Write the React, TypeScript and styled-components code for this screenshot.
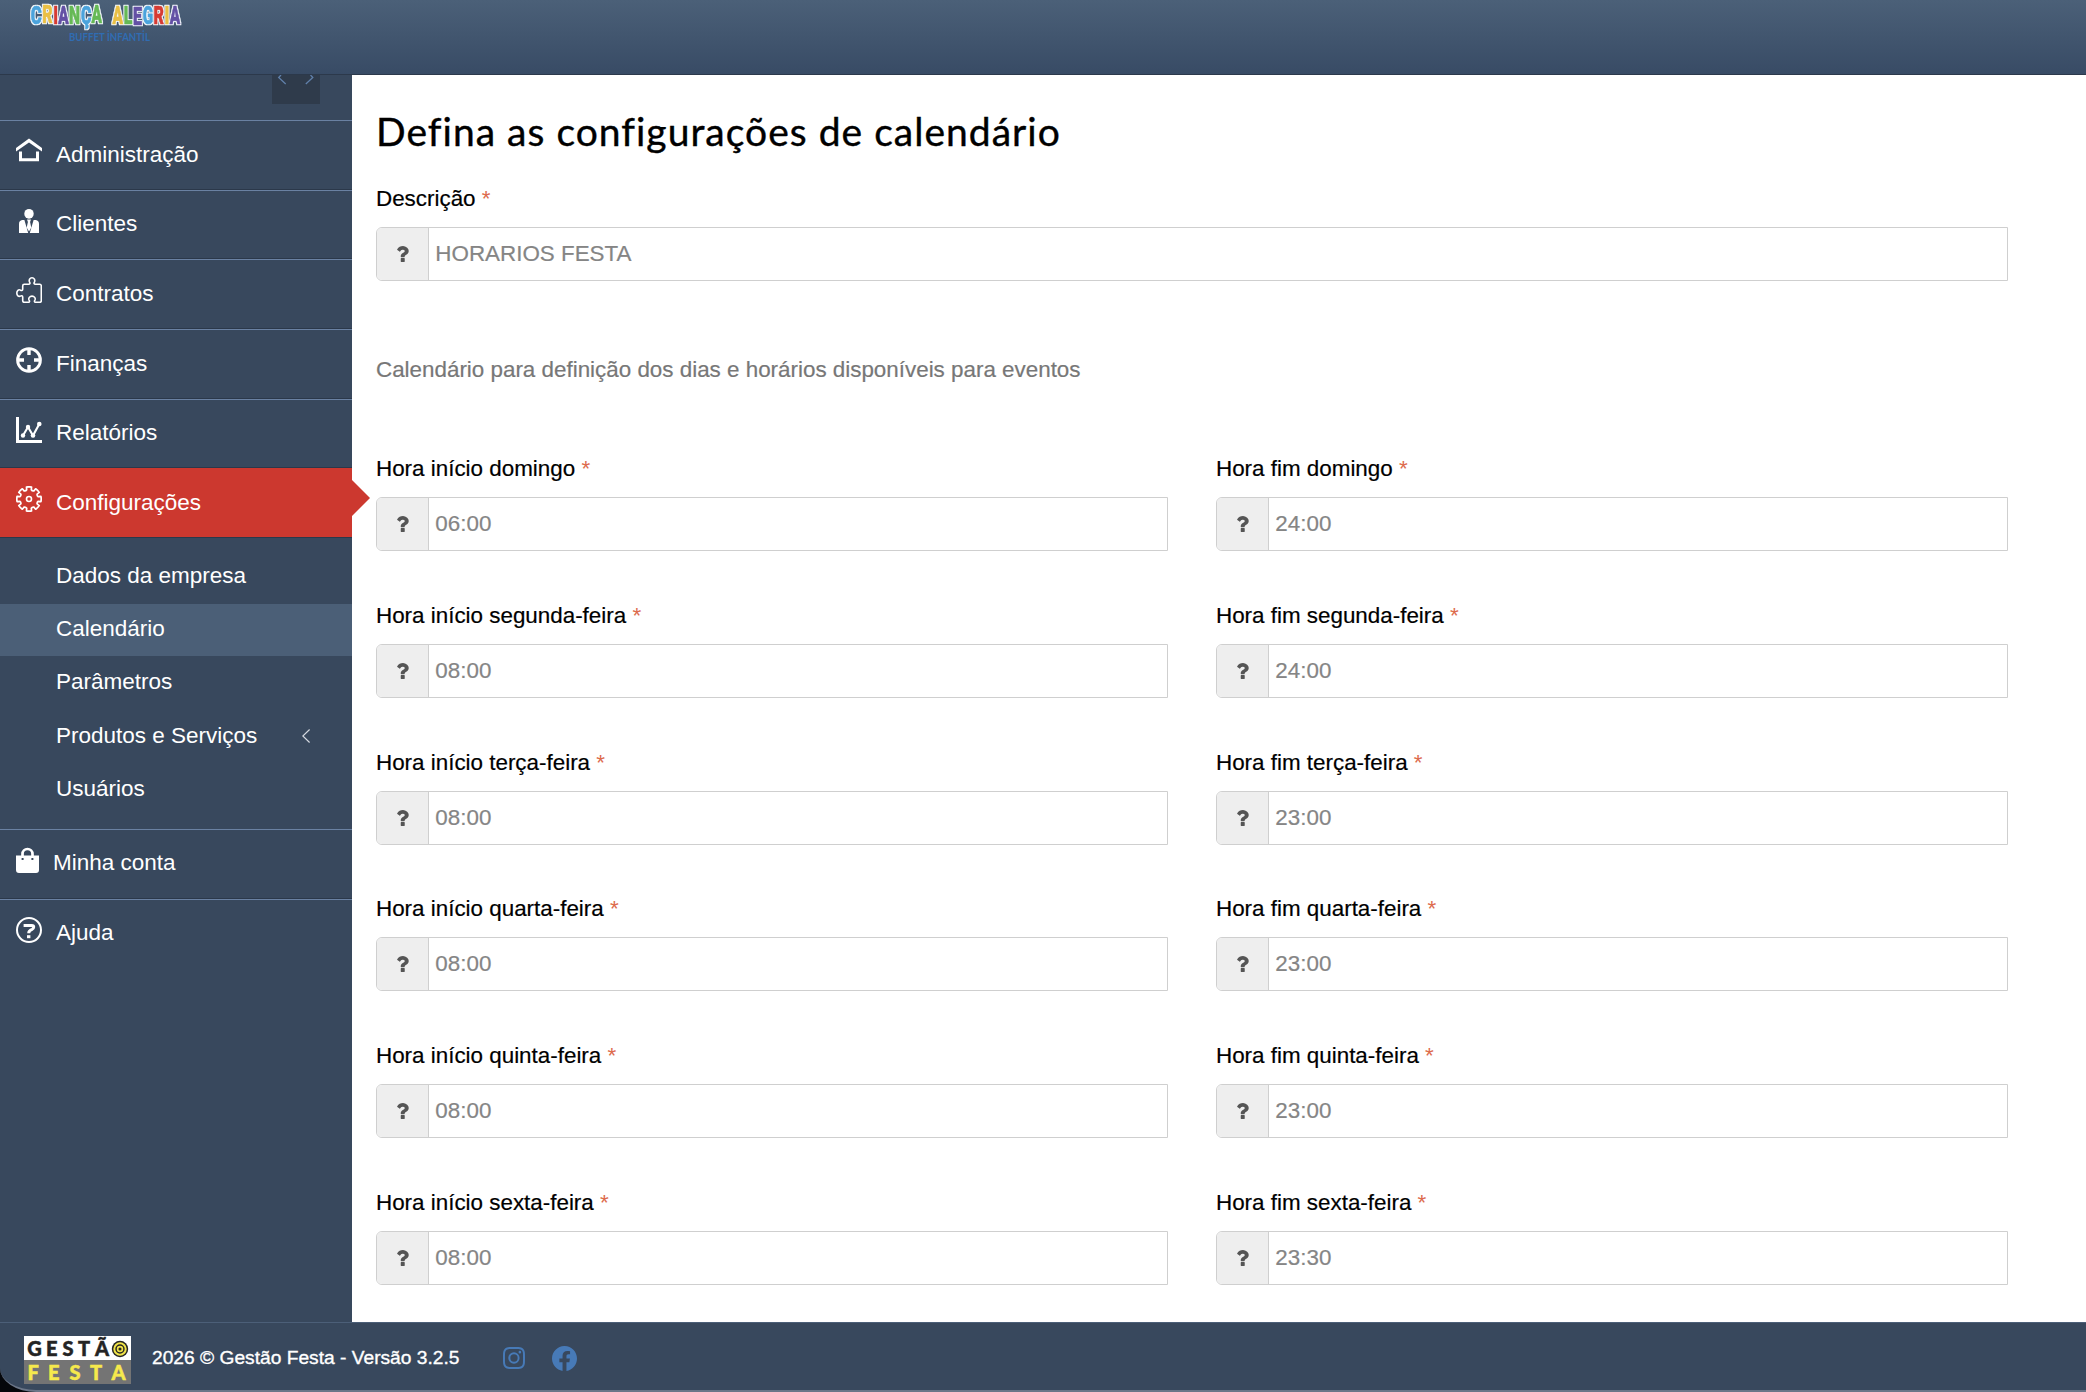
import React from 'react';
import styled, { createGlobalStyle, css } from 'styled-components';
import { BsFacebook, BsInstagram } from 'react-icons/bs';

const sans = `"Liberation Sans", Arial, Helvetica, sans-serif`;

const Global = createGlobalStyle`
  *, *::before, *::after { box-sizing: border-box; }
  html, body { margin: 0; padding: 0; background: #05070b; }
  body { font-family: ${sans}; font-size: 22.5px; overflow: hidden; }
`;

const Page = styled.div`
  display: flex;
  flex-direction: column;
  width: 2086px;
  height: 1392px;
  overflow: hidden;
`;

const Header = styled.header`
  flex: none;
  height: 75px;
  padding-left: 28px;
  background: linear-gradient(to bottom, #4b6078, #384b65);
  border-bottom: 1px solid #2c394b;
`;

const Body = styled.div`
  flex: 1;
  min-height: 0;
  display: flex;
`;

const Sidebar = styled.aside`
  flex: none;
  width: 352px;
  background: #38485d;
  color: #fff;
`;

const TogglerBar = styled.div`
  height: 45px;
  padding-right: 32px;
  display: flex;
  justify-content: flex-end;
  align-items: flex-start;
`;

const Toggler = styled.div`
  width: 48px;
  height: 29px;
  background: #2f3b4b;
`;

const Menu = styled.nav`
  display: flex;
  flex-direction: column;
`;

const MenuItem = styled.a<{ $active?: boolean }>`
  position: relative;
  display: flex;
  align-items: center;
  gap: 14px;
  height: 69.67px;
  padding: 0 16px 0.6px;
  border-top: 1px solid #6a81a2;
  border-bottom: 1px solid #2b384a;
  > svg { flex: none; margin-bottom: 7px; }
  ${(p) =>
    p.$active &&
    css`
      background: #cc382f;
      border-top-color: #cc382f;
      &::after {
        content: '';
        position: absolute;
        left: 352px;
        top: 11px;
        border: 18px solid transparent;
        border-right-width: 0;
        border-left-color: #cc382f;
      }
    `}
  &:last-child { border-bottom-color: transparent; }
`;

const SubMenu = styled.div`
  display: flex;
  flex-direction: column;
  gap: 1.33px;
  padding: 12.3px 0 13.4px;
`;

const SubItem = styled.a<{ $active?: boolean }>`
  display: flex;
  align-items: center;
  justify-content: space-between;
  height: 52px;
  padding: 0 42px 1px 56px;
  background: ${(p) => (p.$active ? '#4b5f77' : 'transparent')};
`;

const Content = styled.main`
  flex: 1;
  min-width: 0;
  background: #fff;
  padding: 29px 78px 0 24px;
  overflow: hidden;
`;

const Title = styled.h1`
  margin: 0;
  height: 55px;
  font: 400 39px/54px Lato, sans-serif;
  letter-spacing: 1.02px;
  color: #000;
  white-space: nowrap;
  -webkit-text-stroke: 0.4px #000;
`;

const Field = styled.div`
  display: flex;
  flex-direction: column;
`;

const Label = styled.label`
  height: 30px;
  line-height: 30px;
  margin-bottom: 13px;
  font-size: 22.4px;
  color: #000;
  -webkit-text-stroke: 0.2px #000;
`;

const Required = styled.span`
  color: #dd6b4d;
  -webkit-text-stroke: 0;
`;

const InputGroup = styled.div`
  display: flex;
  height: 54px;
  border: 1px solid #cfcfcf;
  border-radius: 6px 0 0 6px;
  background: #fff;
  overflow: hidden;
`;

const Addon = styled.span`
  flex: none;
  width: 52px;
  display: flex;
  align-items: center;
  justify-content: center;
  background: #eee;
  border-right: 1px solid #cfcfcf;
`;

const Value = styled.span`
  flex: 1;
  padding-left: 6.3px;
  line-height: 51px;
  font-size: 22.4px;
  color: #858585;
  -webkit-text-stroke: 0.2px #858585;
`;

const DescriptionField = styled(Field)`
  margin-top: 25px;
`;

const Hint = styled.p`
  margin: 74px 0 69px;
  height: 30px;
  line-height: 30px;
  font-size: 22.4px;
  color: #777;
  -webkit-text-stroke: 0.2px #777;
`;

const Grid = styled.div`
  display: grid;
  grid-template-columns: 1fr 1fr;
  column-gap: 48px;
  row-gap: 49.8px;
`;

const FooterBack = styled.div`
  flex: none;
  height: 70px;
  background: #05070b;
`;

const Footer = styled.footer`
  height: 70px;
  display: flex;
  align-items: center;
  padding: 3px 0 0 24px;
  background: #38485d;
  border-top: 1px solid #4c5f78;
  border-bottom: 2px solid #6b7688;
  border-bottom-left-radius: 36px 24px;
`;

const FooterLogo = styled.div`
  width: 107px;
  height: 48px;
  margin: 4px 21px 0 0;
  > svg { display: block; }
`;

const Copyright = styled.span`
  width: 307px;
  font-size: 19.2px;
  color: #fff;
  white-space: nowrap;
  -webkit-text-stroke: 0.35px #fff;
`;

const Social = styled.div`
  display: flex;
  align-items: center;
  gap: 27px;
  margin-left: 43.5px;
  color: #477ab7;
  > svg { display: block; }
`;

const BrandSvg = styled.svg`
  display: block;
`;

/* ---------- drawings ---------- */

const Icon = ({ children }: { children: React.ReactNode }) => (
  <svg width="26" height="26" viewBox="0 0 26 26" fill="none" stroke="#fff">
    {children}
  </svg>
);

const HomeIcon = () => (
  <Icon>
    <path d="M0 10 13 0.600 26 10V13.600L13 4.500 0 13.600z" fill="#fff" stroke="none" />
    <path d="M4.500 13.400v8.300h17v-8.300" strokeWidth="3" />
  </Icon>
);

const ClientIcon = () => (
  <Icon>
    <g fill="#fff" stroke="none">
      <ellipse cx="13" cy="5.8" rx="4.7" ry="4.9" />
      <path d="M8.4 12 12.2 25H5.5a2.5 2.5 0 0 1-2.5-2.5V16c0-2.4 1.2-3.6 3.2-3.9zM17.6 12 13.8 25H23v-9c0-2.4-1.2-3.6-3.2-3.9zM3 22h7v3H3zM11 11.6h4l-.9 2.4 1.2 5.4L13 23.4l-2.3-4 1.2-5.4z" />
    </g>
  </Icon>
);

const PuzzleIcon = () => (
  <Icon>
    <path
      strokeWidth="1.6"
      strokeLinejoin="round"
      d="M8.3 7.3H12.6c1.6 0 1.6-1.2 1-2.2C12.6 3 13.8.8 16 .8s3.4 2.2 2.4 4.3c-.6 1-.6 2.2 1 2.2h4.3a1.6 1.6 0 0 1 1.6 1.6v14.8a1.6 1.6 0 0 1-1.6 1.6h-4c-1.5 0-1.5-1.2-.8-2.2 1-1.9-.6-4-2.9-4s-3.9 2.1-2.9 4c.7 1 .7 2.2-.8 2.2H8.3a1.6 1.6 0 0 1-1.6-1.6V20c0-1.6-1.3-1.5-2.3-.9C2.6 20.1.8 18.5.8 16.1s1.8-4 3.6-3c1 .7 2.3.6 2.3-.9V8.9a1.6 1.6 0 0 1 1.6-1.6z"
    />
  </Icon>
);

const TargetIcon = () => (
  <Icon>
    <circle cx="13" cy="13" r="11.4" strokeWidth="2.9" />
    <path d="M13 2v6M13 18v6M2 13h6M18 13h6" strokeWidth="3.4" />
  </Icon>
);

const ChartIcon = () => (
  <Icon>
    <path d="M1.5 0V24.5H26" strokeWidth="3" />
    <path d="M7 18.500 12 10l5 8.500L23.300 7" strokeWidth="2.1" />
    <g fill="#fff" stroke="none">
      <circle cx="7" cy="18.5" r="2.2" />
      <circle cx="12" cy="10" r="2.2" />
      <circle cx="17" cy="18.5" r="2.3" />
      <circle cx="23.3" cy="7" r="2.3" />
    </g>
  </Icon>
);

const gearPath = (() => {
  const pt = (r: number, deg: number) => {
    const a = (deg * Math.PI) / 180;
    return `${(13 + r * Math.sin(a)).toFixed(2)} ${(13 - r * Math.cos(a)).toFixed(2)}`;
  };
  const parts: string[] = [];
  for (let i = 0; i < 8; i++) {
    const c = i * 45;
    parts.push(
      `${i ? 'L' : 'M'}${pt(9.5, c - 14)}L${pt(12.2, c - 12)}A12.2 12.2 0 0 1 ${pt(12.2, c + 12)}L${pt(9.5, c + 14)}Q${pt(8.4, c + 22.5)} ${pt(9.5, c + 31)}`
    );
  }
  return parts.join('') + 'Z';
})();

const GearIcon = () => (
  <Icon>
    <path d={gearPath} strokeWidth="1.7" strokeLinejoin="round" />
    <circle cx="13" cy="13" r="2.5" strokeWidth="1.6" />
  </Icon>
);

const BagIcon = () => (
  <svg width="23" height="26" viewBox="0 0 23 26" fill="none">
    <path d="M6.500 11V7a5 5 0 0 1 10 0V11" stroke="#fff" strokeWidth="2.7" />
    <path
      fillRule="evenodd"
      fill="#fff"
      d="M0 8.600h23v14.400a3 3 0 0 1-3 3H3a3 3 0 0 1-3-3zM5.600 11v2h2v-2zM15.400 11v2h2v-2z"
    />
  </svg>
);

const HelpIcon = () => (
  <Icon>
    <circle cx="13" cy="13" r="12" strokeWidth="2" />
    <path d="M7.600 8.400h8.200q1.900 0 1.900 1.700 0 1.500-1.700 2.300-3.300 1.400-3.300 3.800" strokeWidth="3" />
    <path d="M11 18.200h3.400v3H11z" fill="#fff" stroke="none" />
  </Icon>
);

const QuestionGlyph = () => (
  <svg width="12.7" height="16" viewBox="388 256 1016 1280" fill="#555">
    <path d="M1088 1256v240q0 16-12 28t-28 12h-240q-16 0-28-12t-12-28v-240q0-16 12-28t28-12h240q16 0 28 12t12 28zm316-600q0 54-15.500 101t-35 76.500-55 59.500-57.500 43.500-61 35.500q-41 23-68.500 65t-27.500 67q0 17-12 32.500t-28 15.500h-240q-15 0-25.500-18.500t-10.500-37.500v-45q0-83 65-156.500t143-108.500q59-27 84-56t25-76q0-42-46.500-74t-107.500-32q-65 0-108 29-35 25-107 115-13 16-31 16-12 0-25-8l-164-125q-13-10-15.500-25t5.500-28q160-266 464-266 80 0 161 31t146 83 106 127.500 41 158.500z" />
  </svg>
);

/* glyph, x, width, colour, vertical shift */
type Letter = [string, number, number, string, number];
const letters: Letter[] = [
  ['C', 2.8, 11, '#4ba3dc', 0],
  ['R', 14.2, 10.4, '#e9bf45', -1],
  ['I', 25.2, 4.8, '#d63b33', 0],
  ['A', 30.3, 10.4, '#6451a5', 0],
  ['N', 41, 11, '#66b956', 0],
  ['Ç', 53, 10.4, '#4ba3dc', 0],
  ['A', 63.5, 10.4, '#66b956', -1],
  ['A', 84.6, 10.4, '#e9bf45', 0],
  ['L', 95.8, 8.6, '#66b956', 0],
  ['E', 105, 9, '#6451a5', 1],
  ['G', 114.7, 10.4, '#4ba3dc', 0],
  ['R', 125.6, 10.4, '#d63b33', 0],
  ['I', 136.6, 4.8, '#e9bf45', 0],
  ['A', 141.8, 10.4, '#6451a5', 0],
];

const BrandLogo = () => (
  <BrandSvg width="160" height="46" viewBox="0 0 160 46">
    <defs>
      <filter id="halo" x="-5%" y="-20%" width="110%" height="140%" colorInterpolationFilters="sRGB">
        <feMorphology in="SourceAlpha" operator="dilate" radius="1.400" result="grown" />
        <feGaussianBlur in="grown" stdDeviation="0.400" result="soft" />
        <feFlood floodColor="#f4f8fc" />
        <feComposite in2="soft" operator="in" result="white" />
        <feMerge>
          <feMergeNode in="white" />
          <feMergeNode in="SourceGraphic" />
        </feMerge>
      </filter>
    </defs>
    <g
      filter="url(#halo)"
      fontFamily="Roboto, sans-serif"
      fontWeight="900"
      fontSize="26.500"
      strokeLinejoin="round"
      strokeWidth="0.700"
    >
      {letters.map(([ch, x, w, color, dy], i) => (
        <text
          key={i}
          x={x}
          y={23.7 + dy}
          textLength={w}
          lengthAdjust="spacingAndGlyphs"
          fill={color}
          stroke={color}
        >
          {ch}
        </text>
      ))}
    </g>
    <text
      x="41"
      y="40.7"
      textLength="81"
      lengthAdjust="spacingAndGlyphs"
      fontFamily="Lato, sans-serif"
      fontWeight="700"
      fontSize="11"
      fill="#306cb2"
    >
      BUFFET İNFANTİL
    </text>
  </BrandSvg>
);

const GestaoLogo = () => (
  <svg width="107" height="48" viewBox="0 0 107 48">
    <rect width="107" height="24" fill="#fff" />
    <rect y="24" width="107" height="24" fill="#747474" />
    <g fontFamily="Lato, sans-serif" fontWeight="900" fontSize="20" strokeWidth="0.5">
      <g fill="#242424" stroke="#242424">
        <text x="3.3" y="20">G</text>
        <text x="22" y="20">E</text>
        <text x="38.500" y="20">S</text>
        <text x="54" y="20">T</text>
        <text x="71" y="20">Ã</text>
      </g>
      <g fill="#f6e94c" stroke="#f6e94c">
        <text x="3.500" y="43.500">F</text>
        <text x="24" y="43.500">E</text>
        <text x="45.500" y="43.500">S</text>
        <text x="66" y="43.500">T</text>
        <text x="87.500" y="43.500">A</text>
      </g>
    </g>
    <circle cx="96" cy="13" r="8.200" fill="#242424" />
    <circle cx="96" cy="13" r="5.700" fill="none" stroke="#f0e348" strokeWidth="2" />
    <circle cx="96" cy="13" r="2.400" fill="none" stroke="#f0e348" strokeWidth="1.700" />
  </svg>
);

/* ---------- page parts ---------- */

interface TextFieldProps {
  label: string;
  value: string;
}

const FieldBody = ({ label, value }: TextFieldProps) => (
  <>
    <Label>
      {label} <Required>*</Required>
    </Label>
    <InputGroup>
      <Addon>
        <QuestionGlyph />
      </Addon>
      <Value>{value}</Value>
    </InputGroup>
  </>
);

const days: [string, string, string][] = [
  ['domingo', '06:00', '24:00'],
  ['segunda-feira', '08:00', '24:00'],
  ['terça-feira', '08:00', '23:00'],
  ['quarta-feira', '08:00', '23:00'],
  ['quinta-feira', '08:00', '23:00'],
  ['sexta-feira', '08:00', '23:30'],
];

export default function App() {
  return (
    <Page>
      <Global />
      <Header>
        <BrandLogo />
      </Header>
      <Body>
        <Sidebar>
          <TogglerBar>
            <Toggler>
              <svg width="48" height="29" viewBox="0 0 48 29" fill="none" stroke="#6080aa" strokeWidth="1.3">
                <path d="M9 0 6.700 2.500 13.700 9M38.500 0 40.800 2.500 33.800 9" />
              </svg>
            </Toggler>
          </TogglerBar>
          <Menu>
            <MenuItem><HomeIcon />Administração</MenuItem>
            <MenuItem><ClientIcon />Clientes</MenuItem>
            <MenuItem><PuzzleIcon />Contratos</MenuItem>
            <MenuItem><TargetIcon />Finanças</MenuItem>
            <MenuItem><ChartIcon />Relatórios</MenuItem>
            <MenuItem $active><GearIcon />Configurações</MenuItem>
            <SubMenu>
              <SubItem>Dados da empresa</SubItem>
              <SubItem $active>Calendário</SubItem>
              <SubItem>Parâmetros</SubItem>
              <SubItem>
                Produtos e Serviços
                <svg width="8" height="14" viewBox="0 0 8 14" fill="none" stroke="#d5dae1" strokeWidth="1.2">
                  <path d="M7.600.5.800 7l6.800 6.500" />
                </svg>
              </SubItem>
              <SubItem>Usuários</SubItem>
            </SubMenu>
            <MenuItem><BagIcon />Minha conta</MenuItem>
            <MenuItem><HelpIcon />Ajuda</MenuItem>
          </Menu>
        </Sidebar>
        <Content>
          <Title>Defina as configurações de calendário</Title>
          <DescriptionField>
            <FieldBody label="Descrição" value="HORARIOS FESTA" />
          </DescriptionField>
          <Hint>Calendário para definição dos dias e horários disponíveis para eventos</Hint>
          <Grid>
            {days.map(([day, start, end]) => (
              <React.Fragment key={day}>
                <Field>
                  <FieldBody label={`Hora início ${day}`} value={start} />
                </Field>
                <Field>
                  <FieldBody label={`Hora fim ${day}`} value={end} />
                </Field>
              </React.Fragment>
            ))}
          </Grid>
        </Content>
      </Body>
      <FooterBack>
        <Footer>
          <FooterLogo>
            <GestaoLogo />
          </FooterLogo>
          <Copyright>2026 © Gestão Festa - Versão 3.2.5</Copyright>
          <Social>
            <BsInstagram size={22} />
            <BsFacebook size={25} />
          </Social>
        </Footer>
      </FooterBack>
    </Page>
  );
}
